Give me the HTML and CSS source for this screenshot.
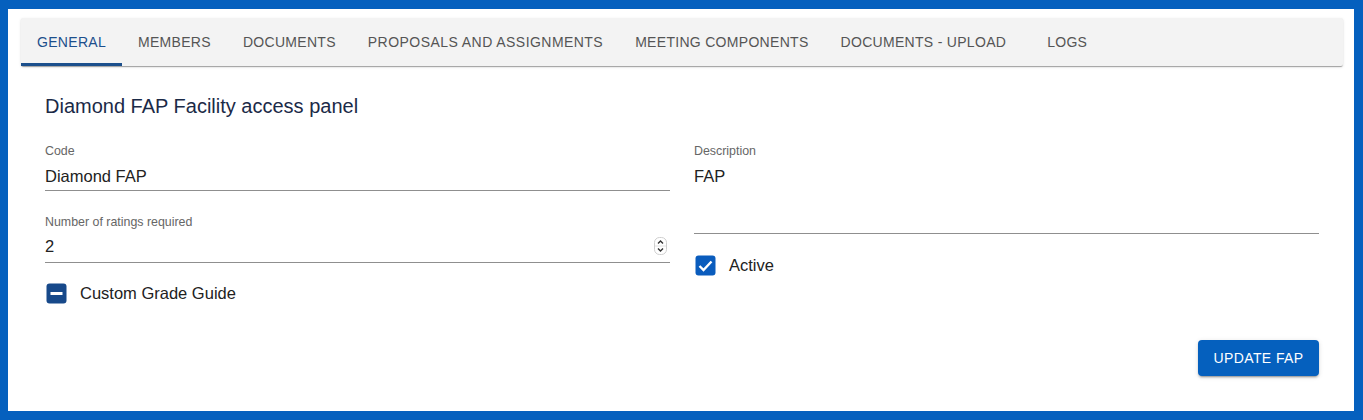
FILE: index.html
```html
<!DOCTYPE html>
<html lang="en">
<head>
<meta charset="utf-8">
<title>Diamond FAP</title>
<link rel="stylesheet" href="styles.css">
</head>
<body>
<div class="frame">
  <div class="panel">
    <nav class="tabs">
      <div class="tab active">General</div>
      <div class="tab">Members</div>
      <div class="tab">Documents</div>
      <div class="tab wide">Proposals and Assignments</div>
      <div class="tab">Meeting Components</div>
      <div class="tab">Documents - Upload</div>
      <div class="tab">Logs</div>
    </nav>
    <div class="content">
      <h1 class="title">Diamond FAP Facility access panel</h1>
      <div class="grid">
        <div class="col">
          <div class="field">
            <div class="label">Code</div>
            <div class="input">Diamond FAP</div>
          </div>
          <div class="field">
            <div class="label">Number of ratings required</div>
            <div class="input number">
              <span>2</span>
              <svg class="spin" width="13" height="18" viewBox="0 0 13 18">
                <rect x="0.5" y="0.5" width="12" height="17" rx="5" fill="#fff" stroke="#cfcfcf"/>
                <line x1="1" y1="9" x2="12" y2="9" stroke="#e2e2e2"/>
                <path d="M4 6.5 L6.5 4 L9 6.5" fill="none" stroke="#333" stroke-width="1.4"/>
                <path d="M4 11.5 L6.5 14 L9 11.5" fill="none" stroke="#333" stroke-width="1.4"/>
              </svg>
            </div>
          </div>
          <label class="check">
            <svg width="21" height="21" viewBox="0 0 21 21"><rect x="0.5" y="0.5" width="20" height="20" rx="3" fill="#17498a"/><rect x="4.5" y="9" width="12" height="3" fill="#fff"/></svg>
            <span>Custom Grade Guide</span>
          </label>
        </div>
        <div class="col">
          <div class="field">
            <div class="label">Description</div>
            <div class="input multi">FAP</div>
          </div>
          <label class="check active-check">
            <svg width="21" height="21" viewBox="0 0 21 21"><rect x="0.5" y="0.5" width="20" height="20" rx="3" fill="#0a5cbd"/><path d="M4.5 11 L8.5 15 L16.5 6.5" fill="none" stroke="#fff" stroke-width="2.4"/></svg>
            <span>Active</span>
          </label>
        </div>
      </div>
      <div class="actions">
        <button class="btn">Update FAP</button>
      </div>
    </div>
  </div>
</div>
</body>
</html>
```

FILE: styles.css
```css
* { box-sizing: border-box; }
html, body { margin: 0; padding: 0; }
body {
  background: #0560be;
  font-family: "Liberation Sans", Arial, sans-serif;
  width: 1363px;
  height: 420px;
}
.frame {
  padding: 9px 9px 9px 8px;
  height: 420px;
}
.panel {
  background: #fff;
  height: 402px;
  padding: 9px 11px 0 13px;
}
.tabs {
  display: flex;
  height: 48px;
  background: #f3f3f3;
  box-shadow: 0 2px 1px -1px rgba(0,0,0,0.2), 0 1px 1px 0 rgba(0,0,0,0.14), 0 1px 3px 0 rgba(0,0,0,0.12);
  border-radius: 2px;
}
.tab {
  min-width: 90px;
  padding: 0 16px;
  display: flex;
  align-items: center;
  justify-content: center;
  font-size: 14px;
  letter-spacing: 0.3px;
  text-transform: uppercase;
  color: #555;
  position: relative;
}
.tab.wide { letter-spacing: 0.45px; }
.tab.active { color: #1c4f8c; }
.tab.active::after {
  content: "";
  position: absolute;
  left: 0; right: 0; bottom: 0;
  height: 3px;
  background: #1c4f8c;
}
.content {
  padding: 28px 24px 0 24px;
}
.title {
  margin: 0 0 26px 0;
  font-size: 20px;
  font-weight: normal;
  color: #1b2a47;
  line-height: 24px;
}
.grid {
  display: grid;
  grid-template-columns: 1fr 1fr;
  column-gap: 24px;
}
.field { margin-bottom: 24px; }
.label {
  font-size: 12.4px;
  line-height: 14px;
  color: #666;
}
.input {
  margin-top: 4px;
  height: 29px;
  border-bottom: 1px solid #8f8f8f;
  font-size: 16.5px;
  color: #222;
  line-height: 26px;
  padding-top: 1px;
}
.input.number {
  display: flex;
  justify-content: space-between;
  align-items: center;
  padding-right: 3px;
  margin-top: 3px;
  height: 31px;
  line-height: 22px;
  padding-top: 0;
  padding-bottom: 2px;
}
.input.multi { height: 72px; }
.check {
  display: flex;
  align-items: center;
  gap: 13px;
  font-size: 16.5px;
  color: #222;
  margin-left: 1px;
}
.check:not(.active-check) { margin-top: -4px; }
.active-check { margin-top: -3px; }
.actions {
  display: flex;
  justify-content: flex-end;
  margin-top: 36px;
}
.btn {
  background: #0560be;
  color: #fff;
  border: none;
  border-radius: 4px;
  height: 36px;
  width: 121px;
  font-family: inherit;
  font-size: 14px;
  letter-spacing: 0.4px;
  text-transform: uppercase;
  box-shadow: 0 3px 1px -2px rgba(0,0,0,0.2), 0 2px 2px 0 rgba(0,0,0,0.14), 0 1px 5px 0 rgba(0,0,0,0.12);
}
```
